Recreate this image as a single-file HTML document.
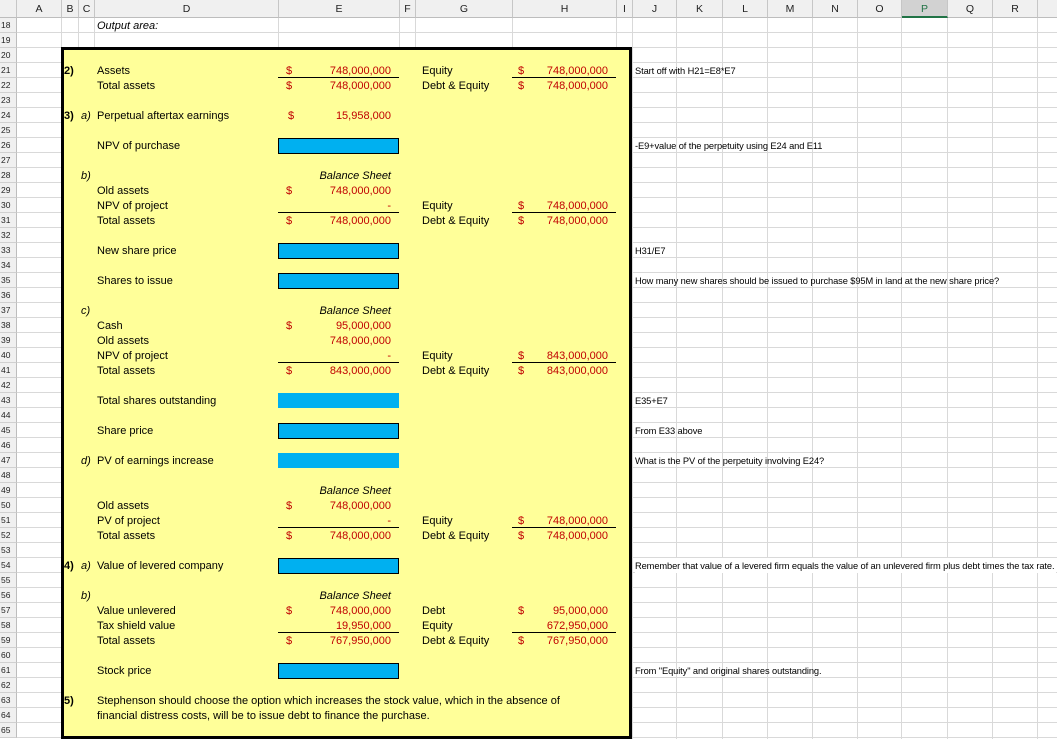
<!DOCTYPE html>
<html><head><meta charset="utf-8"><style>
*{margin:0;padding:0;box-sizing:border-box}
body{width:1057px;height:739px;overflow:hidden;background:#fff;font-family:"Liberation Sans",Arial,sans-serif;font-size:11px;color:#000;position:relative}
.grid{position:absolute;left:17px;top:18px;width:1040px;height:721px;background:repeating-linear-gradient(to bottom,transparent 0,transparent 14px,#d9d9d9 14px,#d9d9d9 15px)}
.vl{position:absolute;top:18px;height:721px;width:1px;background:#d9d9d9}
.ch{position:absolute;top:0;height:18px;line-height:18px;text-align:center;background:#f0f0f0;border-right:1px solid #c6c6c6;border-bottom:1px solid #bdbdbd;font-size:10.5px;color:#222}
.rh{position:absolute;left:0;width:17px;height:15px;line-height:15px;background:#f0f0f0;border-bottom:1px solid #d0d0d0;border-right:1px solid #bdbdbd;font-size:8.5px;color:#222;padding-left:1px}
.box{position:absolute;left:61px;top:47px;width:571px;height:692px;background:#ffff99;border:3px solid #000}
.t{position:absolute;height:15px;line-height:15px;white-space:nowrap;padding-top:1px}
.r{color:#c00000}
.n{text-align:right}
.b{font-weight:bold}
.i{font-style:italic}
.ul{position:absolute;height:1px;background:#000}
.bl{position:absolute;left:278px;width:121px;height:16px;background:#00b0f0}
.bb{border:1px solid #000}
.note{position:absolute;left:635px;height:15px;line-height:15px;font-size:9.3px;white-space:nowrap;letter-spacing:-0.1px;padding-top:1px}
</style></head><body>
<div class="grid"></div>
<div class="vl" style="left:61px"></div><div class="vl" style="left:78px"></div><div class="vl" style="left:94px"></div><div class="vl" style="left:278px"></div><div class="vl" style="left:399px"></div><div class="vl" style="left:415px"></div><div class="vl" style="left:512px"></div><div class="vl" style="left:616px"></div><div class="vl" style="left:632px"></div><div class="vl" style="left:676px"></div><div class="vl" style="left:722px"></div><div class="vl" style="left:767px"></div><div class="vl" style="left:812px"></div><div class="vl" style="left:857px"></div><div class="vl" style="left:901px"></div><div class="vl" style="left:947px"></div><div class="vl" style="left:992px"></div><div class="vl" style="left:1037px"></div>

<div class="ch" style="left:0;width:17px"></div>
<div class="ch" style="left:17px;width:45px">A</div>
<div class="ch" style="left:62px;width:17px">B</div>
<div class="ch" style="left:79px;width:16px">C</div>
<div class="ch" style="left:95px;width:184px">D</div>
<div class="ch" style="left:279px;width:121px">E</div>
<div class="ch" style="left:400px;width:16px">F</div>
<div class="ch" style="left:416px;width:97px">G</div>
<div class="ch" style="left:513px;width:104px">H</div>
<div class="ch" style="left:617px;width:16px">I</div>
<div class="ch" style="left:633px;width:44px">J</div>
<div class="ch" style="left:677px;width:46px">K</div>
<div class="ch" style="left:723px;width:45px">L</div>
<div class="ch" style="left:768px;width:45px">M</div>
<div class="ch" style="left:813px;width:45px">N</div>
<div class="ch" style="left:858px;width:44px">O</div>
<div class="ch" style="left:902px;width:46px;background:#d2d2d2;border-bottom:2px solid #217346;color:#217346">P</div>
<div class="ch" style="left:948px;width:45px">Q</div>
<div class="ch" style="left:993px;width:45px">R</div>
<div class="ch" style="left:1038px;width:19px;border-right:none"></div>

<div class="rh" style="top:18px">18</div><div class="rh" style="top:33px">19</div><div class="rh" style="top:48px">20</div><div class="rh" style="top:63px">21</div><div class="rh" style="top:78px">22</div><div class="rh" style="top:93px">23</div><div class="rh" style="top:108px">24</div><div class="rh" style="top:123px">25</div><div class="rh" style="top:138px">26</div><div class="rh" style="top:153px">27</div><div class="rh" style="top:168px">28</div><div class="rh" style="top:183px">29</div><div class="rh" style="top:198px">30</div><div class="rh" style="top:213px">31</div><div class="rh" style="top:228px">32</div><div class="rh" style="top:243px">33</div><div class="rh" style="top:258px">34</div><div class="rh" style="top:273px">35</div><div class="rh" style="top:288px">36</div><div class="rh" style="top:303px">37</div><div class="rh" style="top:318px">38</div><div class="rh" style="top:333px">39</div><div class="rh" style="top:348px">40</div><div class="rh" style="top:363px">41</div><div class="rh" style="top:378px">42</div><div class="rh" style="top:393px">43</div><div class="rh" style="top:408px">44</div><div class="rh" style="top:423px">45</div><div class="rh" style="top:438px">46</div><div class="rh" style="top:453px">47</div><div class="rh" style="top:468px">48</div><div class="rh" style="top:483px">49</div><div class="rh" style="top:498px">50</div><div class="rh" style="top:513px">51</div><div class="rh" style="top:528px">52</div><div class="rh" style="top:543px">53</div><div class="rh" style="top:558px">54</div><div class="rh" style="top:573px">55</div><div class="rh" style="top:588px">56</div><div class="rh" style="top:603px">57</div><div class="rh" style="top:618px">58</div><div class="rh" style="top:633px">59</div><div class="rh" style="top:648px">60</div><div class="rh" style="top:663px">61</div><div class="rh" style="top:678px">62</div><div class="rh" style="top:693px">63</div><div class="rh" style="top:708px">64</div><div class="rh" style="top:723px">65</div>

<div class="t i" style="left:97px;top:18px">Output area:</div>
<div class="box"></div>

<div class="t b" style="left:64px;top:63px">2)</div>
<div class="t" style="left:97px;top:63px">Assets</div>
<div class="t r" style="left:286px;top:63px">$</div><div class="t r n" style="left:300px;width:91px;top:63px">748,000,000</div>
<div class="ul" style="left:278px;width:121px;top:77px"></div>
<div class="t" style="left:422px;top:63px">Equity</div>
<div class="t r" style="left:518px;top:63px">$</div><div class="t r n" style="left:520px;width:88px;top:63px">748,000,000</div>
<div class="ul" style="left:512px;width:104px;top:77px"></div>
<div class="t" style="left:97px;top:78px">Total assets</div>
<div class="t r" style="left:286px;top:78px">$</div><div class="t r n" style="left:300px;width:91px;top:78px">748,000,000</div>
<div class="t" style="left:422px;top:78px">Debt &amp; Equity</div>
<div class="t r" style="left:518px;top:78px">$</div><div class="t r n" style="left:520px;width:88px;top:78px">748,000,000</div>

<div class="t b" style="left:64px;top:108px">3)</div><div class="t i" style="left:81px;top:108px">a)</div>
<div class="t" style="left:97px;top:108px">Perpetual aftertax earnings</div>
<div class="t r" style="left:288px;top:108px">$</div><div class="t r n" style="left:300px;width:91px;top:108px">15,958,000</div>
<div class="t" style="left:97px;top:138px">NPV of purchase</div>
<div class="bl bb" style="top:138px"></div>

<div class="t i" style="left:81px;top:168px">b)</div>
<div class="t i n" style="left:300px;width:91px;top:168px">Balance Sheet</div>
<div class="t" style="left:97px;top:183px">Old assets</div>
<div class="t r" style="left:286px;top:183px">$</div><div class="t r n" style="left:300px;width:91px;top:183px">748,000,000</div>
<div class="t" style="left:97px;top:198px">NPV of project</div>
<div class="t r n" style="left:300px;width:91px;top:198px">-</div>
<div class="ul" style="left:278px;width:121px;top:212px"></div>
<div class="t" style="left:422px;top:198px">Equity</div>
<div class="t r" style="left:518px;top:198px">$</div><div class="t r n" style="left:520px;width:88px;top:198px">748,000,000</div>
<div class="ul" style="left:512px;width:104px;top:212px"></div>
<div class="t" style="left:97px;top:213px">Total assets</div>
<div class="t r" style="left:286px;top:213px">$</div><div class="t r n" style="left:300px;width:91px;top:213px">748,000,000</div>
<div class="t" style="left:422px;top:213px">Debt &amp; Equity</div>
<div class="t r" style="left:518px;top:213px">$</div><div class="t r n" style="left:520px;width:88px;top:213px">748,000,000</div>
<div class="t" style="left:97px;top:243px">New share price</div>
<div class="bl bb" style="top:243px"></div>
<div class="t" style="left:97px;top:273px">Shares to issue</div>
<div class="bl bb" style="top:273px"></div>

<div class="t i" style="left:81px;top:303px">c)</div>
<div class="t i n" style="left:300px;width:91px;top:303px">Balance Sheet</div>
<div class="t" style="left:97px;top:318px">Cash</div>
<div class="t r" style="left:286px;top:318px">$</div><div class="t r n" style="left:300px;width:91px;top:318px">95,000,000</div>
<div class="t" style="left:97px;top:333px">Old assets</div>
<div class="t r n" style="left:300px;width:91px;top:333px">748,000,000</div>
<div class="t" style="left:97px;top:348px">NPV of project</div>
<div class="t r n" style="left:300px;width:91px;top:348px">-</div>
<div class="ul" style="left:278px;width:121px;top:362px"></div>
<div class="t" style="left:422px;top:348px">Equity</div>
<div class="t r" style="left:518px;top:348px">$</div><div class="t r n" style="left:520px;width:88px;top:348px">843,000,000</div>
<div class="ul" style="left:512px;width:104px;top:362px"></div>
<div class="t" style="left:97px;top:363px">Total assets</div>
<div class="t r" style="left:286px;top:363px">$</div><div class="t r n" style="left:300px;width:91px;top:363px">843,000,000</div>
<div class="t" style="left:422px;top:363px">Debt &amp; Equity</div>
<div class="t r" style="left:518px;top:363px">$</div><div class="t r n" style="left:520px;width:88px;top:363px">843,000,000</div>
<div class="t" style="left:97px;top:393px">Total shares outstanding</div>
<div class="bl" style="top:393px;height:15px"></div>
<div class="t" style="left:97px;top:423px">Share price</div>
<div class="bl bb" style="top:423px"></div>
<div class="t i" style="left:81px;top:453px">d)</div>
<div class="t" style="left:97px;top:453px">PV of earnings increase</div>
<div class="bl" style="top:453px;height:15px"></div>

<div class="t i n" style="left:300px;width:91px;top:483px">Balance Sheet</div>
<div class="t" style="left:97px;top:498px">Old assets</div>
<div class="t r" style="left:286px;top:498px">$</div><div class="t r n" style="left:300px;width:91px;top:498px">748,000,000</div>
<div class="t" style="left:97px;top:513px">PV of project</div>
<div class="t r n" style="left:300px;width:91px;top:513px">-</div>
<div class="ul" style="left:278px;width:121px;top:527px"></div>
<div class="t" style="left:422px;top:513px">Equity</div>
<div class="t r" style="left:518px;top:513px">$</div><div class="t r n" style="left:520px;width:88px;top:513px">748,000,000</div>
<div class="ul" style="left:512px;width:104px;top:527px"></div>
<div class="t" style="left:97px;top:528px">Total assets</div>
<div class="t r" style="left:286px;top:528px">$</div><div class="t r n" style="left:300px;width:91px;top:528px">748,000,000</div>
<div class="t" style="left:422px;top:528px">Debt &amp; Equity</div>
<div class="t r" style="left:518px;top:528px">$</div><div class="t r n" style="left:520px;width:88px;top:528px">748,000,000</div>

<div class="t b" style="left:64px;top:558px">4)</div><div class="t i" style="left:81px;top:558px">a)</div>
<div class="t" style="left:97px;top:558px">Value of levered company</div>
<div class="bl bb" style="top:558px"></div>
<div class="t i" style="left:81px;top:588px">b)</div>
<div class="t i n" style="left:300px;width:91px;top:588px">Balance Sheet</div>
<div class="t" style="left:97px;top:603px">Value unlevered</div>
<div class="t r" style="left:286px;top:603px">$</div><div class="t r n" style="left:300px;width:91px;top:603px">748,000,000</div>
<div class="t" style="left:422px;top:603px">Debt</div>
<div class="t r" style="left:518px;top:603px">$</div><div class="t r n" style="left:520px;width:88px;top:603px">95,000,000</div>
<div class="t" style="left:97px;top:618px">Tax shield value</div>
<div class="t r n" style="left:300px;width:91px;top:618px">19,950,000</div>
<div class="ul" style="left:278px;width:121px;top:632px"></div>
<div class="t" style="left:422px;top:618px">Equity</div>
<div class="t r n" style="left:520px;width:88px;top:618px">672,950,000</div>
<div class="ul" style="left:512px;width:104px;top:632px"></div>
<div class="t" style="left:97px;top:633px">Total assets</div>
<div class="t r" style="left:286px;top:633px">$</div><div class="t r n" style="left:300px;width:91px;top:633px">767,950,000</div>
<div class="t" style="left:422px;top:633px">Debt &amp; Equity</div>
<div class="t r" style="left:518px;top:633px">$</div><div class="t r n" style="left:520px;width:88px;top:633px">767,950,000</div>
<div class="t" style="left:97px;top:663px">Stock price</div>
<div class="bl bb" style="top:663px"></div>
<div class="t b" style="left:64px;top:693px">5)</div>
<div class="t" style="left:97px;top:693px">Stephenson should choose the option which increases the stock value, which in the absence of</div>
<div class="t" style="left:97px;top:708px">financial distress costs, will be to issue debt to finance the purchase.</div>

<div class="note" style="top:63px">Start off with H21=E8*E7</div>
<div class="note" style="top:138px">-E9+value of the perpetuity using E24 and E11</div>
<div class="note" style="top:243px">H31/E7</div>
<div class="note" style="top:273px">How many new shares should be issued to purchase $95M in land at the new share price?</div>
<div class="note" style="top:393px">E35+E7</div>
<div class="note" style="top:423px">From E33 above</div>
<div class="note" style="top:453px">What is the PV of the perpetuity involving E24?</div>
<div class="note" style="top:558px;background:#fff;padding-right:2px">Remember that value of a levered firm equals the value of an unlevered firm plus debt times the tax rate.</div>
<div class="note" style="top:663px">From "Equity" and original shares outstanding.</div>
</body></html>
